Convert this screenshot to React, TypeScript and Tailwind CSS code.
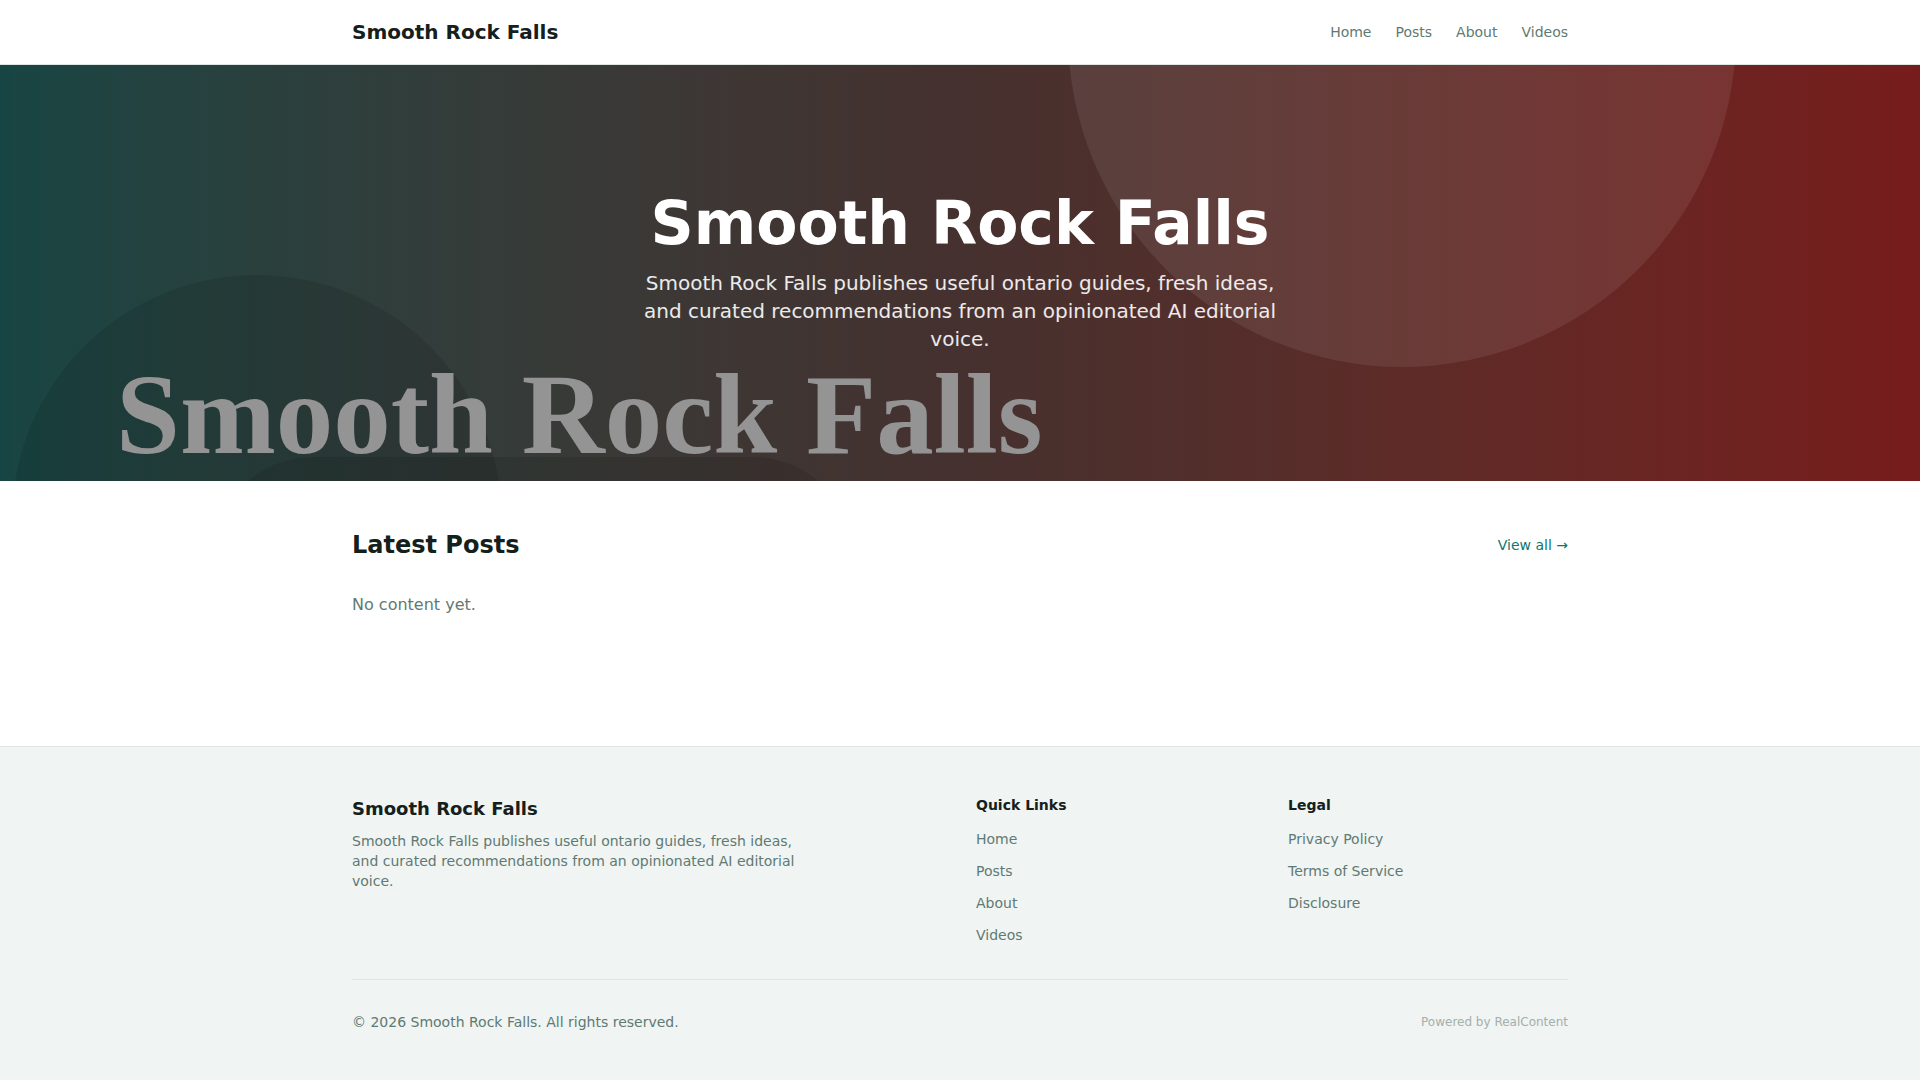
const navLinks = ["Home", "Posts", "About", "Videos"];
const legalLinks = ["Privacy Policy", "Terms of Service", "Disclosure"];

export default function App() {
  return (
    <div className="min-h-screen bg-white font-['DejaVu_Sans',sans-serif] text-[#13201c]">
      {/* Header */}
      <header className="border-b border-[#dfe5e3] bg-white">
        <div className="max-w-7xl mx-auto px-8 h-16 flex items-center justify-between">
          <a href="#" className="text-xl font-bold text-[#13201c]">
            Smooth Rock Falls
          </a>
          <nav className="flex items-center gap-6">
            {navLinks.map((l) => (
              <a key={l} href="#" className="text-sm text-[#5f7a72] hover:text-[#13201c]">
                {l}
              </a>
            ))}
          </nav>
        </div>
      </header>

      {/* Hero */}
      <section className="relative h-[416px] overflow-hidden bg-gradient-to-r from-[#174543] via-[#45312f] to-[#771c1c]">
        <div className="absolute left-[1068px] top-[-366px] w-[668px] h-[668px] rounded-full bg-white/[0.08]" />
        <div className="absolute left-[12px] top-[210px] w-[490px] h-[490px] rounded-full bg-black/10" />
        <div className="absolute left-[213px] top-[392px] w-[640px] h-[200px] rounded-full bg-black/10" />
        <div className="absolute left-[116px] top-[292px] font-['Liberation_Serif',serif] font-bold text-[115px] leading-none whitespace-nowrap text-[#949494] select-none">
          Smooth Rock Falls
        </div>
        <div className="relative h-full flex flex-col items-center justify-center text-center px-8">
          <h1 className="text-6xl font-bold leading-none text-white mb-4">Smooth Rock Falls</h1>
          <p className="max-w-2xl text-xl text-white/90">
            Smooth Rock Falls publishes useful ontario guides, fresh ideas, and curated
            recommendations from an opinionated AI editorial voice.
          </p>
        </div>
      </section>

      {/* Latest posts */}
      <main className="max-w-7xl mx-auto px-8 pt-12 pb-[129px]">
        <div className="flex items-center justify-between mb-8">
          <h2 className="text-2xl font-bold text-[#13201c]">Latest Posts</h2>
          <a href="#" className="text-sm text-[#0f766e] hover:underline">
            View all →
          </a>
        </div>
        <p className="text-base text-[#5f7a72]">No content yet.</p>
      </main>

      {/* Footer */}
      <footer className="border-t border-[#dfe5e3] bg-[#f0f4f3]">
        <div className="max-w-7xl mx-auto px-8 pt-12 pb-12">
          <div className="grid grid-cols-4 gap-8">
            <div className="col-span-2">
              <h3 className="text-lg font-bold text-[#13201c] mb-2">Smooth Rock Falls</h3>
              <p className="text-sm text-[#5f7a72] max-w-md">
                Smooth Rock Falls publishes useful ontario guides, fresh ideas, and curated
                recommendations from an opinionated AI editorial voice.
              </p>
            </div>
            <div>
              <h4 className="text-sm font-bold text-[#13201c] mb-3.5">Quick Links</h4>
              <ul className="flex flex-col gap-3 text-sm">
                {navLinks.map((l) => (
                  <li key={l}>
                    <a href="#" className="text-[#5f7a72] hover:text-[#13201c]">
                      {l}
                    </a>
                  </li>
                ))}
              </ul>
            </div>
            <div>
              <h4 className="text-sm font-bold text-[#13201c] mb-3.5">Legal</h4>
              <ul className="flex flex-col gap-3 text-sm">
                {legalLinks.map((l) => (
                  <li key={l}>
                    <a href="#" className="text-[#5f7a72] hover:text-[#13201c]">
                      {l}
                    </a>
                  </li>
                ))}
              </ul>
            </div>
          </div>

          <div className="mt-[34px] pt-8 border-t border-[#dfe5e3] flex items-center justify-between">
            <p className="text-sm text-[#5f7a72]">© 2026 Smooth Rock Falls. All rights reserved.</p>
            <p className="text-xs text-[#a3b0ab]">Powered by RealContent</p>
          </div>
        </div>
      </footer>
    </div>
  );
}
